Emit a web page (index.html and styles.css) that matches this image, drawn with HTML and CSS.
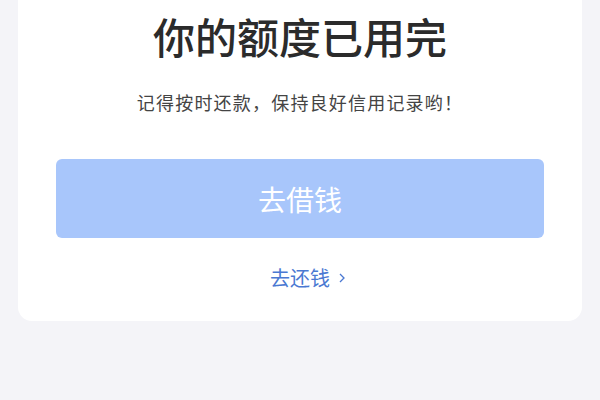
FILE: index.html
```html
<!DOCTYPE html>
<html lang="zh-CN">
<head>
    <meta charset="UTF-8">
    <meta name="viewport" content="width=device-width, initial-scale=1.0">
    <title>额度已用完</title>
    <link rel="stylesheet" href="styles.css">
</head>
<body>

<main class="page">
    <section class="card">
        <h1 class="title">你的额度已用完</h1>
        <p class="tip">记得按时还款，保持良好信用记录哟！</p>
        <button class="borrow-btn" type="button">去借钱</button>
        <a class="repay-link" href="#">去还钱<svg class="chevron" width="6" height="10" viewBox="0 0 6 10"><path d="M1 1l4 4-4 4" fill="none" stroke="currentColor" stroke-width="1.3"/></svg></a>
    </section>
</main>

</body>
</html>
```

FILE: styles.css
```css
body {
    margin: 0;
    padding: 0;
    background-color: #f4f4f8;
    font-family: "Noto Sans CJK SC", "Noto Sans", sans-serif;
}
.page {
    padding: 0 18px;
}
.card {
    background-color: #ffffff;
    border-radius: 0 0 14px 14px;
    padding: 8px 38px 28px;
    display: flex;
    flex-direction: column;
    align-items: center;
}
.title {
    margin: 0;
    font-size: 42px;
    font-weight: 500;
    line-height: 56px;
    color: #2b2b2b;
}
.tip {
    margin: 26px 0 0;
    font-size: 18px;
    letter-spacing: 1.2px;
    line-height: 24px;
    color: #444444;
}
.borrow-btn {
    margin-top: 45px;
    width: 100%;
    height: 79px;
    border: none;
    border-radius: 6px;
    background-color: #a8c6fb;
    color: #ffffff;
    font-family: inherit;
    font-size: 28px;
}
.repay-link {
    margin-top: 25px;
    display: flex;
    align-items: center;
    font-size: 20px;
    line-height: 30px;
    color: #4a78d2;
    text-decoration: none;
}
.chevron {
    margin-left: 9px;
    margin-right: -15px; /* keep the text itself centred */
}
```
